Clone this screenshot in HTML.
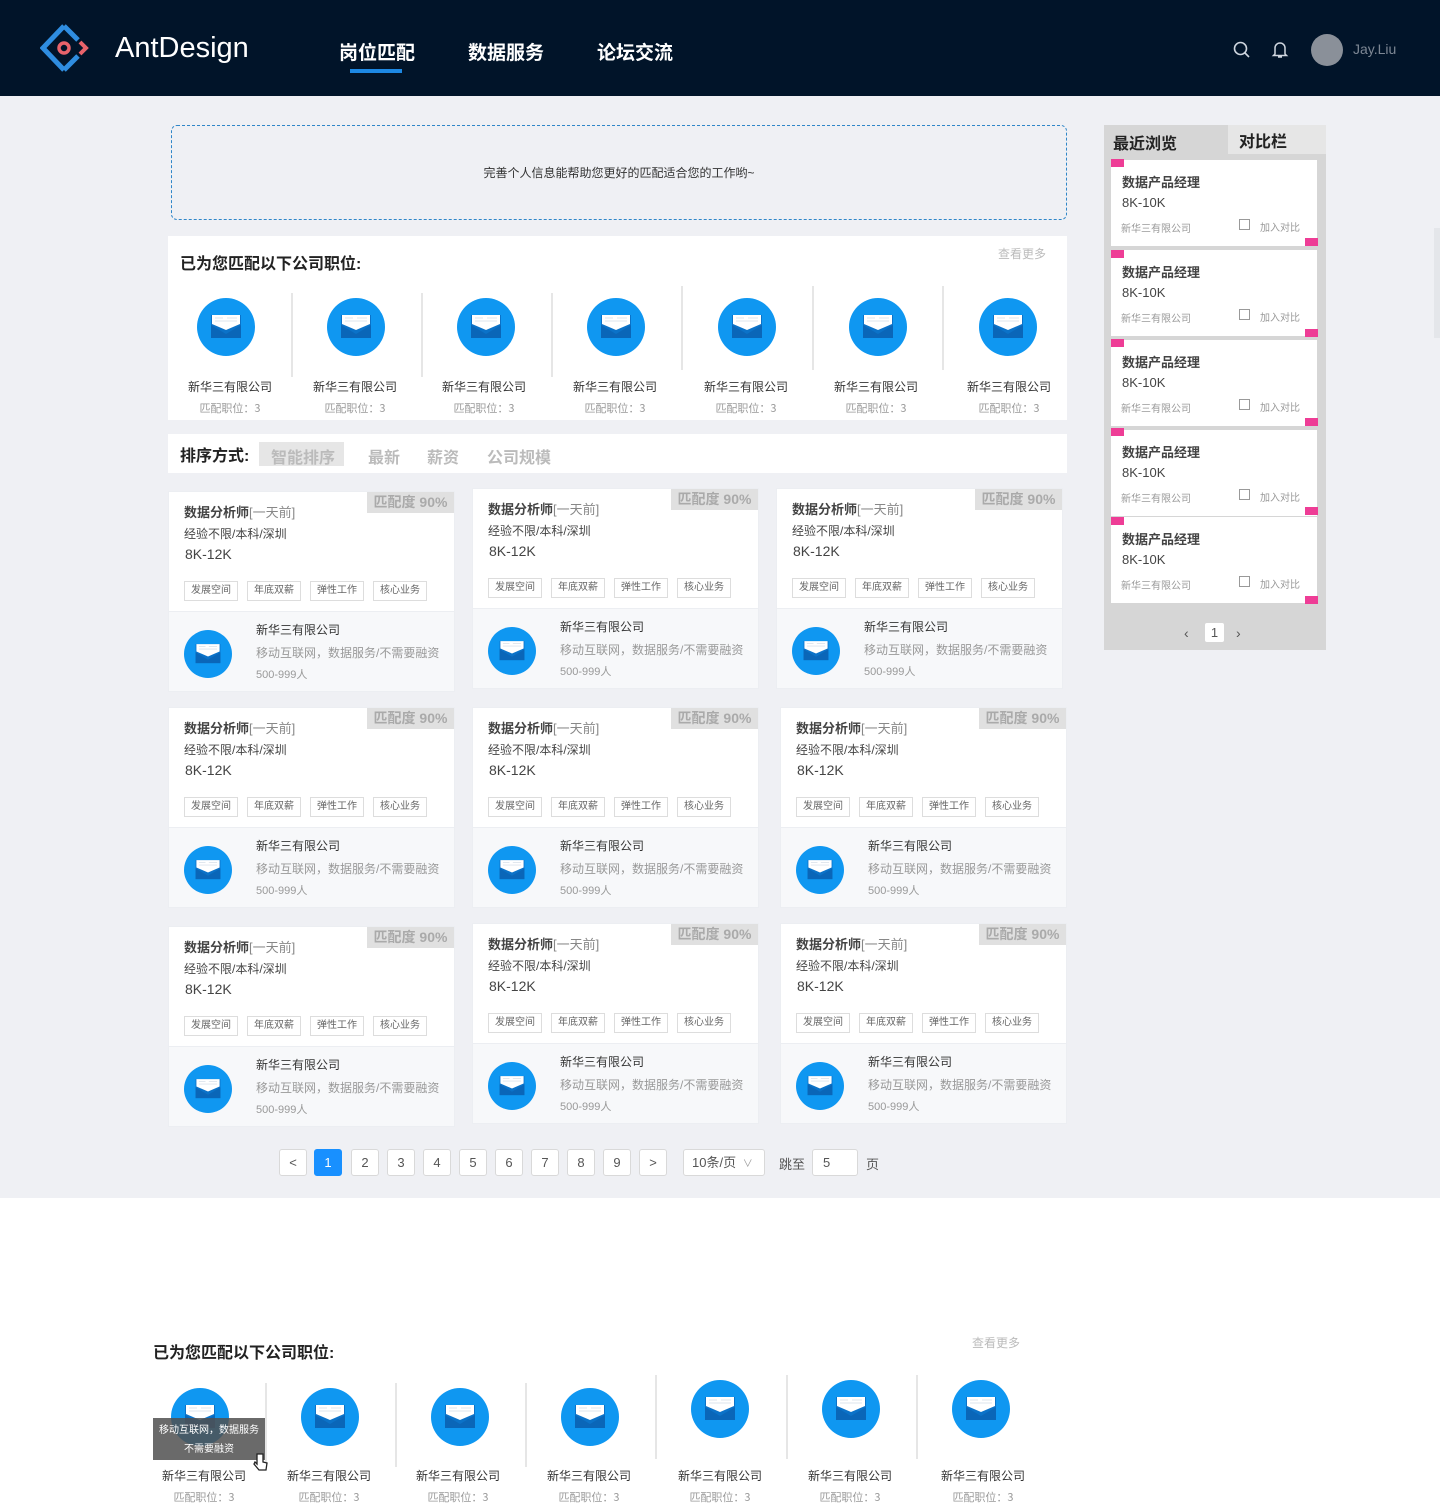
<!DOCTYPE html>
<html><head><meta charset="utf-8">
<style>
*{margin:0;padding:0;box-sizing:border-box}
body{width:1440px;height:1508px;position:relative;background:#fff;font-family:"Liberation Sans","Noto Sans CJK SC",sans-serif;color:#333;overflow:hidden}
.a{position:absolute}
.bg{left:0;top:96px;width:1440px;height:1102px;background:#eff0f4}
.hd{left:0;top:0;width:1440px;height:96px;background:#011429}
.nav{color:#fff;font-size:19px;font-weight:bold;top:38px}
.ic{width:58px;height:58px}
.cn{font-size:12px;color:#333;width:120px;text-align:center}
.cs{font-size:11px;color:#999;width:120px;text-align:center;font-family:"Noto Sans CJK SC",sans-serif}
.dv{width:2px;height:84px;background:#e6e6e6}
.card{width:287px;height:201px;background:#f7f8fa;border:1px solid #eceef2}
.card .top{position:absolute;left:0;top:0;width:285px;height:120px;background:#fff;border-bottom:1px solid #eceef2}
.card .mt{position:absolute;right:0;top:0;width:87px;height:21px;background:#e0e0e0;color:#aaa;font-size:14px;font-weight:bold;text-align:center;line-height:21px}
.card .t{position:absolute;left:15px;top:10px;font-size:13px;font-weight:bold;color:#444}
.card .t span{font-weight:normal;color:#888}
.card .l2{position:absolute;left:15px;top:33px;font-size:12px;color:#444}
.card .sal{position:absolute;left:16px;top:54px;font-size:14px;color:#444}
.card .tags{position:absolute;left:15px;top:89px;display:flex;gap:9px}
.card .tags i{font-style:normal;font-size:10px;color:#666;border:1px solid #ddd;padding:2px 6px;line-height:14px}
.card svg{position:absolute;left:15px;top:138px;width:48px;height:48px}
.card .c1{position:absolute;left:87px;top:129px;font-size:12px;color:#333}
.card .c2{position:absolute;left:87px;top:152px;font-size:12px;color:#999}
.card .c3{position:absolute;left:87px;top:174px;font-size:11px;color:#999}
.si{left:1111px;width:206px;height:86px;background:#fff}
.si b{position:absolute;left:11px;top:12px;font-size:13px;color:#444}
.si .s{position:absolute;left:11px;top:35px;font-size:13px;color:#444}
.si .c{position:absolute;left:10px;top:60px;font-size:10px;color:#999;font-family:"Noto Sans CJK SC",sans-serif}
.si .cb{position:absolute;left:128px;top:59px;width:11px;height:11px;border:1px solid #999}
.si .d{position:absolute;left:149px;top:59px;font-size:10px;color:#999}
.pk{width:13px;height:8px;background:#ee3d96}
.pg{top:1149px;width:28px;height:27px;border:1px solid #d9d9d9;border-radius:3px;background:#fff;font-size:13px;color:#555;text-align:center;line-height:25px}
</style></head><body>
<div class="a bg"></div>
<div class="a hd"></div>
<svg class="a" style="left:40px;top:24px" width="54" height="50" viewBox="0 0 54 50"><path d="M24 2 L3 24 L24 46" fill="none" stroke="#2f8de0" stroke-width="5"/><path d="M24 2 L38 16" fill="none" stroke="#2f8de0" stroke-width="5"/><path d="M24 46 L38 32" fill="none" stroke="#2f8de0" stroke-width="5"/><circle cx="24" cy="24" r="5" fill="none" stroke="#e8636b" stroke-width="3.5"/><path d="M40 18 L46 24 L40 30" fill="none" stroke="#e8636b" stroke-width="4"/></svg>
<div class="a" style="left:115px;top:32px;color:#fff;font-size:29px">AntDesign</div>
<div class="a nav" style="left:339px">岗位匹配</div>
<div class="a" style="left:350px;top:69px;width:52px;height:4px;background:#1d88e3"></div>
<div class="a nav" style="left:468px">数据服务</div>
<div class="a nav" style="left:597px">论坛交流</div>
<svg class="a" style="left:1232px;top:40px" width="20" height="20" viewBox="0 0 20 20"><circle cx="8.5" cy="8.5" r="6" fill="none" stroke="#cfd6df" stroke-width="1.6"/><path d="M13 13 L17 17" stroke="#cfd6df" stroke-width="1.6"/></svg>
<svg class="a" style="left:1271px;top:40px" width="18" height="20" viewBox="0 0 18 20"><path d="M4 14 V8 a5 5 0 0 1 10 0 V14 L15.5 15.5 H2.5 Z M7 17 h4" fill="none" stroke="#cfd6df" stroke-width="1.5"/></svg>
<div class="a" style="left:1311px;top:34px;width:32px;height:32px;border-radius:50%;background:#8a9099"></div>
<div class="a" style="left:1353px;top:41px;color:#7d8794;font-size:14px">Jay.Liu</div>

<div class="a" style="left:171px;top:125px;width:896px;height:95px;border:1px dashed #2f86c8;border-radius:6px"></div>
<div class="a" style="left:171px;top:164px;width:896px;text-align:center;font-size:12px;color:#333">完善个人信息能帮助您更好的匹配适合您的工作哟~</div>

<div class="a" style="left:168px;top:236px;width:899px;height:184px;background:#fff"></div>
<div class="a" style="left:180px;top:250px;font-size:16px;font-weight:bold;color:#222">已为您匹配以下公司职位:</div>
<div class="a" style="left:998px;top:245px;font-size:12px;color:#bbb">查看更多</div>

<svg width="0" height="0" style="position:absolute"><defs><g id="env"><circle cx="29" cy="29" r="29" fill="#0f97f1"/><rect x="14" y="17" width="30" height="23" fill="#0b72c8"/><path d="M14 27 L29 36 L44 27 V40 H14Z" fill="#0a66b8"/><path d="M15 17 H43 V26 L29 32 L15 26Z" fill="#fff"/><path d="M18 20 H26 M30 20 H40 M18 23 H40" stroke="#dde4ec" stroke-width="1"/></g></defs></svg>

<svg class="a ic" style="left:197px;top:298px" viewBox="0 0 58 58"><use href="#env"/></svg>
<svg class="a ic" style="left:327px;top:298px" viewBox="0 0 58 58"><use href="#env"/></svg>
<svg class="a ic" style="left:457px;top:298px" viewBox="0 0 58 58"><use href="#env"/></svg>
<svg class="a ic" style="left:587px;top:298px" viewBox="0 0 58 58"><use href="#env"/></svg>
<svg class="a ic" style="left:718px;top:298px" viewBox="0 0 58 58"><use href="#env"/></svg>
<svg class="a ic" style="left:849px;top:298px" viewBox="0 0 58 58"><use href="#env"/></svg>
<svg class="a ic" style="left:979px;top:298px" viewBox="0 0 58 58"><use href="#env"/></svg>
<div class="a dv" style="left:291px;top:293px"></div><div class="a dv" style="left:421px;top:293px"></div><div class="a dv" style="left:551px;top:293px"></div><div class="a dv" style="left:681px;top:286px"></div><div class="a dv" style="left:812px;top:286px"></div><div class="a dv" style="left:942px;top:286px"></div>
<div class="a cn" style="left:170px;top:378px">新华三有限公司</div><div class="a cs" style="left:170px;top:400px">匹配职位：3</div>
<div class="a cn" style="left:295px;top:378px">新华三有限公司</div><div class="a cs" style="left:295px;top:400px">匹配职位：3</div>
<div class="a cn" style="left:424px;top:378px">新华三有限公司</div><div class="a cs" style="left:424px;top:400px">匹配职位：3</div>
<div class="a cn" style="left:555px;top:378px">新华三有限公司</div><div class="a cs" style="left:555px;top:400px">匹配职位：3</div>
<div class="a cn" style="left:686px;top:378px">新华三有限公司</div><div class="a cs" style="left:686px;top:400px">匹配职位：3</div>
<div class="a cn" style="left:816px;top:378px">新华三有限公司</div><div class="a cs" style="left:816px;top:400px">匹配职位：3</div>
<div class="a cn" style="left:949px;top:378px">新华三有限公司</div><div class="a cs" style="left:949px;top:400px">匹配职位：3</div>

<div class="a" style="left:168px;top:434px;width:899px;height:39px;background:#fff"></div>
<div class="a" style="left:180px;top:442px;font-size:16px;font-weight:bold;color:#222">排序方式:</div>
<div class="a" style="left:259px;top:442px;width:85px;height:24px;background:#e6e6e6"></div>
<div class="a" style="left:271px;top:444px;font-size:16px;font-weight:bold;color:#bbb">智能排序</div>
<div class="a" style="left:368px;top:444px;font-size:16px;font-weight:bold;color:#bbb">最新</div>
<div class="a" style="left:427px;top:444px;font-size:16px;font-weight:bold;color:#bbb">薪资</div>
<div class="a" style="left:487px;top:444px;font-size:16px;font-weight:bold;color:#bbb">公司规模</div>

<div class="a card" style="left:168px;top:491px"><div class="top"></div><div class="mt">匹配度 90%</div><div class="t">数据分析师<span>[一天前]</span></div><div class="l2">经验不限/本科/深圳</div><div class="sal">8K-12K</div><div class="tags"><i>发展空间</i><i>年底双薪</i><i>弹性工作</i><i>核心业务</i></div><svg viewBox="0 0 58 58"><use href="#env"/></svg><div class="c1">新华三有限公司</div><div class="c2">移动互联网，数据服务/不需要融资</div><div class="c3">500-999人</div></div>
<div class="a card" style="left:472px;top:488px"><div class="top"></div><div class="mt">匹配度 90%</div><div class="t">数据分析师<span>[一天前]</span></div><div class="l2">经验不限/本科/深圳</div><div class="sal">8K-12K</div><div class="tags"><i>发展空间</i><i>年底双薪</i><i>弹性工作</i><i>核心业务</i></div><svg viewBox="0 0 58 58"><use href="#env"/></svg><div class="c1">新华三有限公司</div><div class="c2">移动互联网，数据服务/不需要融资</div><div class="c3">500-999人</div></div>
<div class="a card" style="left:776px;top:488px"><div class="top"></div><div class="mt">匹配度 90%</div><div class="t">数据分析师<span>[一天前]</span></div><div class="l2">经验不限/本科/深圳</div><div class="sal">8K-12K</div><div class="tags"><i>发展空间</i><i>年底双薪</i><i>弹性工作</i><i>核心业务</i></div><svg viewBox="0 0 58 58"><use href="#env"/></svg><div class="c1">新华三有限公司</div><div class="c2">移动互联网，数据服务/不需要融资</div><div class="c3">500-999人</div></div>

<div class="a card" style="left:168px;top:707px"><div class="top"></div><div class="mt">匹配度 90%</div><div class="t">数据分析师<span>[一天前]</span></div><div class="l2">经验不限/本科/深圳</div><div class="sal">8K-12K</div><div class="tags"><i>发展空间</i><i>年底双薪</i><i>弹性工作</i><i>核心业务</i></div><svg viewBox="0 0 58 58"><use href="#env"/></svg><div class="c1">新华三有限公司</div><div class="c2">移动互联网，数据服务/不需要融资</div><div class="c3">500-999人</div></div>
<div class="a card" style="left:472px;top:707px"><div class="top"></div><div class="mt">匹配度 90%</div><div class="t">数据分析师<span>[一天前]</span></div><div class="l2">经验不限/本科/深圳</div><div class="sal">8K-12K</div><div class="tags"><i>发展空间</i><i>年底双薪</i><i>弹性工作</i><i>核心业务</i></div><svg viewBox="0 0 58 58"><use href="#env"/></svg><div class="c1">新华三有限公司</div><div class="c2">移动互联网，数据服务/不需要融资</div><div class="c3">500-999人</div></div>
<div class="a card" style="left:780px;top:707px"><div class="top"></div><div class="mt">匹配度 90%</div><div class="t">数据分析师<span>[一天前]</span></div><div class="l2">经验不限/本科/深圳</div><div class="sal">8K-12K</div><div class="tags"><i>发展空间</i><i>年底双薪</i><i>弹性工作</i><i>核心业务</i></div><svg viewBox="0 0 58 58"><use href="#env"/></svg><div class="c1">新华三有限公司</div><div class="c2">移动互联网，数据服务/不需要融资</div><div class="c3">500-999人</div></div>

<div class="a card" style="left:168px;top:926px"><div class="top"></div><div class="mt">匹配度 90%</div><div class="t">数据分析师<span>[一天前]</span></div><div class="l2">经验不限/本科/深圳</div><div class="sal">8K-12K</div><div class="tags"><i>发展空间</i><i>年底双薪</i><i>弹性工作</i><i>核心业务</i></div><svg viewBox="0 0 58 58"><use href="#env"/></svg><div class="c1">新华三有限公司</div><div class="c2">移动互联网，数据服务/不需要融资</div><div class="c3">500-999人</div></div>
<div class="a card" style="left:472px;top:923px"><div class="top"></div><div class="mt">匹配度 90%</div><div class="t">数据分析师<span>[一天前]</span></div><div class="l2">经验不限/本科/深圳</div><div class="sal">8K-12K</div><div class="tags"><i>发展空间</i><i>年底双薪</i><i>弹性工作</i><i>核心业务</i></div><svg viewBox="0 0 58 58"><use href="#env"/></svg><div class="c1">新华三有限公司</div><div class="c2">移动互联网，数据服务/不需要融资</div><div class="c3">500-999人</div></div>
<div class="a card" style="left:780px;top:923px"><div class="top"></div><div class="mt">匹配度 90%</div><div class="t">数据分析师<span>[一天前]</span></div><div class="l2">经验不限/本科/深圳</div><div class="sal">8K-12K</div><div class="tags"><i>发展空间</i><i>年底双薪</i><i>弹性工作</i><i>核心业务</i></div><svg viewBox="0 0 58 58"><use href="#env"/></svg><div class="c1">新华三有限公司</div><div class="c2">移动互联网，数据服务/不需要融资</div><div class="c3">500-999人</div></div>

<div class="a pg" style="left:279px">&lt;</div>
<div class="a pg" style="left:314px;background:#1890ff;border-color:#1890ff;color:#fff">1</div>
<div class="a pg" style="left:351px">2</div><div class="a pg" style="left:387px">3</div><div class="a pg" style="left:423px">4</div><div class="a pg" style="left:459px">5</div><div class="a pg" style="left:495px">6</div><div class="a pg" style="left:531px">7</div><div class="a pg" style="left:567px">8</div><div class="a pg" style="left:603px">9</div>
<div class="a pg" style="left:639px">&gt;</div>
<div class="a pg" style="left:683px;width:82px;text-align:left;padding-left:8px">10条/页 <span style="font-size:10px;color:#999;margin-left:3px">∨</span></div>
<div class="a" style="left:779px;top:1154px;font-size:13px;color:#555">跳至</div>
<div class="a pg" style="left:812px;width:46px;text-align:left;padding-left:10px">5</div>
<div class="a" style="left:866px;top:1154px;font-size:13px;color:#555">页</div>

<div class="a" style="left:1104px;top:125px;width:222px;height:525px;background:#d6d6d6"></div>
<div class="a" style="left:1228px;top:125px;width:98px;height:29px;background:#e6e6e6"></div>
<div class="a" style="left:1113px;top:130px;font-size:16px;font-weight:bold;color:#222">最近浏览</div>
<div class="a" style="left:1239px;top:128px;font-size:16px;font-weight:bold;color:#222">对比栏</div>
<div class="a si" style="top:160px"><b>数据产品经理</b><div class="s">8K-10K</div><div class="c">新华三有限公司</div><div class="cb"></div><div class="d">加入对比</div></div>
<div class="a si" style="top:250px"><b>数据产品经理</b><div class="s">8K-10K</div><div class="c">新华三有限公司</div><div class="cb"></div><div class="d">加入对比</div></div>
<div class="a si" style="top:340px"><b>数据产品经理</b><div class="s">8K-10K</div><div class="c">新华三有限公司</div><div class="cb"></div><div class="d">加入对比</div></div>
<div class="a si" style="top:430px"><b>数据产品经理</b><div class="s">8K-10K</div><div class="c">新华三有限公司</div><div class="cb"></div><div class="d">加入对比</div></div>
<div class="a si" style="top:517px"><b>数据产品经理</b><div class="s">8K-10K</div><div class="c">新华三有限公司</div><div class="cb"></div><div class="d">加入对比</div></div>
<div class="a pk" style="left:1111px;top:159px"></div><div class="a pk" style="left:1305px;top:238px"></div>
<div class="a pk" style="left:1111px;top:250px"></div><div class="a pk" style="left:1305px;top:329px"></div>
<div class="a pk" style="left:1111px;top:339px"></div><div class="a pk" style="left:1305px;top:418px"></div>
<div class="a pk" style="left:1111px;top:428px"></div><div class="a pk" style="left:1305px;top:507px"></div>
<div class="a pk" style="left:1111px;top:517px"></div><div class="a pk" style="left:1305px;top:596px"></div>
<div class="a" style="left:1184px;top:625px;font-size:14px;color:#555">‹</div>
<div class="a" style="left:1205px;top:623px;width:19px;height:19px;background:#fff;border-radius:2px;font-size:13px;text-align:center;line-height:19px;color:#555">1</div>
<div class="a" style="left:1236px;top:625px;font-size:14px;color:#555">›</div>
<div class="a" style="left:1434px;top:228px;width:6px;height:110px;background:#e4e6ea"></div>

<div class="a" style="left:153px;top:1339px;font-size:16px;font-weight:bold;color:#222">已为您匹配以下公司职位:</div>
<div class="a" style="left:972px;top:1334px;font-size:12px;color:#bbb">查看更多</div>
<svg class="a ic" style="left:171px;top:1388px" viewBox="0 0 58 58"><use href="#env"/></svg>
<svg class="a ic" style="left:301px;top:1388px" viewBox="0 0 58 58"><use href="#env"/></svg>
<svg class="a ic" style="left:431px;top:1388px" viewBox="0 0 58 58"><use href="#env"/></svg>
<svg class="a ic" style="left:561px;top:1388px" viewBox="0 0 58 58"><use href="#env"/></svg>
<svg class="a ic" style="left:691px;top:1380px" viewBox="0 0 58 58"><use href="#env"/></svg>
<svg class="a ic" style="left:822px;top:1380px" viewBox="0 0 58 58"><use href="#env"/></svg>
<svg class="a ic" style="left:952px;top:1380px" viewBox="0 0 58 58"><use href="#env"/></svg>
<div class="a dv" style="left:265px;top:1383px"></div><div class="a dv" style="left:395px;top:1383px"></div><div class="a dv" style="left:525px;top:1383px"></div><div class="a dv" style="left:655px;top:1375px"></div><div class="a dv" style="left:786px;top:1375px"></div><div class="a dv" style="left:916px;top:1375px"></div>
<div class="a" style="left:153px;top:1418px;width:112px;height:42px;background:rgba(80,80,80,.85);color:#fff;font-size:10px;text-align:center;line-height:19px;padding-top:3px">移动互联网，数据服务<br>不需要融资</div>
<svg class="a" style="left:253px;top:1452px" width="16" height="20" viewBox="0 0 16 20"><path d="M4 2 v10 l-2 -2 l-1 2 l5 6 h7 l1 -7 l-4 -1 v-8 z" fill="#fff" stroke="#222" stroke-width="1.3"/></svg>
<div class="a cn" style="left:144px;top:1467px">新华三有限公司</div><div class="a cs" style="left:144px;top:1489px">匹配职位：3</div>
<div class="a cn" style="left:269px;top:1467px">新华三有限公司</div><div class="a cs" style="left:269px;top:1489px">匹配职位：3</div>
<div class="a cn" style="left:398px;top:1467px">新华三有限公司</div><div class="a cs" style="left:398px;top:1489px">匹配职位：3</div>
<div class="a cn" style="left:529px;top:1467px">新华三有限公司</div><div class="a cs" style="left:529px;top:1489px">匹配职位：3</div>
<div class="a cn" style="left:660px;top:1467px">新华三有限公司</div><div class="a cs" style="left:660px;top:1489px">匹配职位：3</div>
<div class="a cn" style="left:790px;top:1467px">新华三有限公司</div><div class="a cs" style="left:790px;top:1489px">匹配职位：3</div>
<div class="a cn" style="left:923px;top:1467px">新华三有限公司</div><div class="a cs" style="left:923px;top:1489px">匹配职位：3</div>
</body></html>
